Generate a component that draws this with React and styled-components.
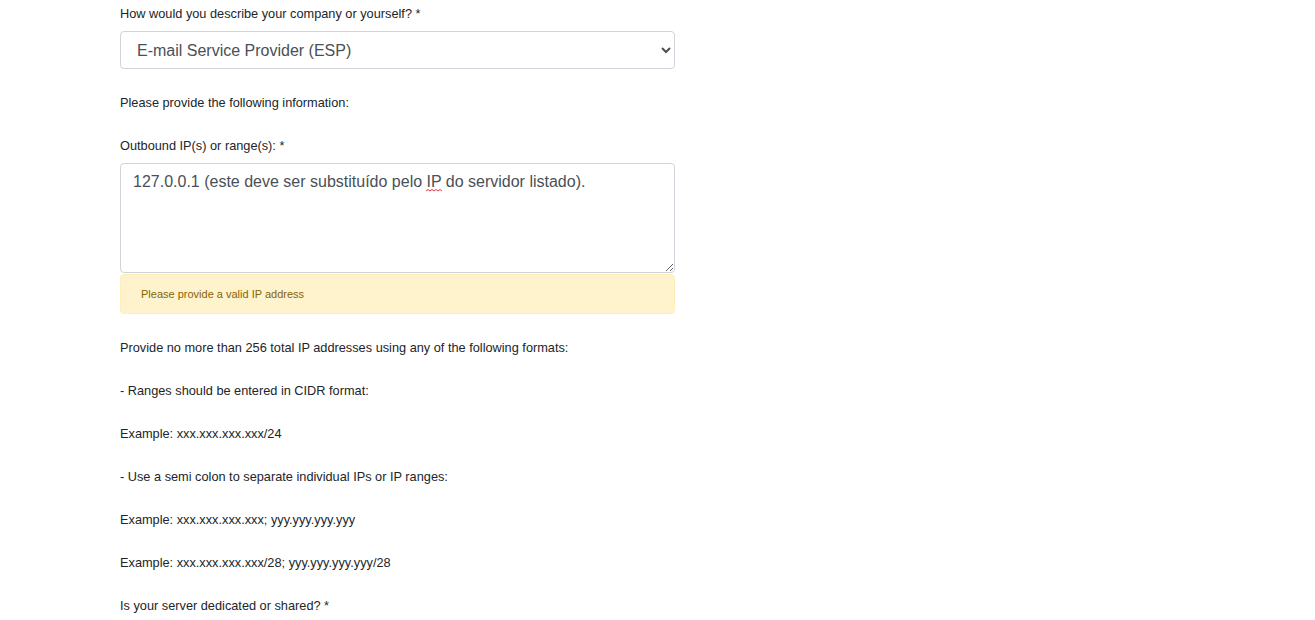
import React from "react";
import styled, { createGlobalStyle } from "styled-components";

const GlobalStyle = createGlobalStyle`
    body {
        margin: 0;
        background: #ffffff;
        font-family: "Liberation Sans", Arial, sans-serif;
        color: #212529;
    }
`;

const App = () => {
    return (
        <>
            <GlobalStyle />
            <Form>
                <Label>How would you describe your company or yourself? *</Label>
                <Select defaultValue="esp">
                    <option value="esp">E-mail Service Provider (ESP)</option>
                    <option value="isp">Internet Service Provider (ISP)</option>
                    <option value="other">Other</option>
                </Select>

                <Text>Please provide the following information:</Text>

                <Label>Outbound IP(s) or range(s): *</Label>
                <Field>
                    <TextArea
                        spellCheck={false}
                        defaultValue="127.0.0.1 (este deve ser substituído pelo IP do servidor listado)."
                    />
                    {/* spell-check mark under "IP" */}
                    <Squiggle width="16" height="3" viewBox="0 0 16 3">
                        <path d="M0 2 L2 0.5 L4 2 L6 0.5 L8 2 L10 0.5 L12 2 L14 0.5 L16 2" fill="none" stroke="#e0242c" strokeWidth="0.9" />
                    </Squiggle>
                </Field>
                <Alert>Please provide a valid IP address</Alert>

                <Text>Provide no more than 256 total IP addresses using any of the following formats:</Text>
                <Text>- Ranges should be entered in CIDR format:</Text>
                <Text>Example: xxx.xxx.xxx.xxx/24</Text>
                <Text>- Use a semi colon to separate individual IPs or IP ranges:</Text>
                <Text>Example: xxx.xxx.xxx.xxx; yyy.yyy.yyy.yyy</Text>
                <Text>Example: xxx.xxx.xxx.xxx/28; yyy.yyy.yyy.yyy/28</Text>
                <Text>Is your server dedicated or shared? *</Text>
            </Form>
        </>
    );
};

export default App;

const Form = styled.div`
    display: flex;
    flex-direction: column;
    width: 555px;
    padding: 0 0 0 120px;
`;

const Label = styled.label`
    font-size: 12.75px;
    line-height: 19px;
    margin: 24px 0 8px 0;

    &:first-child {
        margin-top: 4px;
    }
`;

const Text = styled.p`
    font-size: 12.75px;
    line-height: 19px;
    margin: 24px 0 0 0;
`;

const Select = styled.select`
    height: 38px;
    width: 100%;
    box-sizing: border-box;
    padding: 6px 8px 6px 12px;
    font-family: "Liberation Sans", Arial, sans-serif;
    font-size: 16px;
    color: #495057;
    background: #ffffff;
    border: 1px solid #ced4da;
    border-radius: 4px;
`;

const Field = styled.div`
    position: relative;
`;

const TextArea = styled.textarea`
    width: 100%;
    height: 110px;
    box-sizing: border-box;
    padding: 6px 12px;
    font-family: "Liberation Sans", Arial, sans-serif;
    font-size: 16px;
    line-height: 24px;
    color: #495057;
    background: #ffffff;
    border: 1px solid #ced4da;
    border-radius: 4px;
    resize: vertical;
    display: block;
`;

const Squiggle = styled.svg`
    position: absolute;
    left: 306px;
    top: 26px;
`;

const Alert = styled.div`
    box-sizing: border-box;
    height: 40px;
    margin-top: 1px;
    padding: 0 20px;
    display: flex;
    align-items: center;
    font-size: 11px;
    color: #856404;
    background: #fff3cd;
    border: 1px solid #ffeeba;
    border-radius: 4px;
`;
